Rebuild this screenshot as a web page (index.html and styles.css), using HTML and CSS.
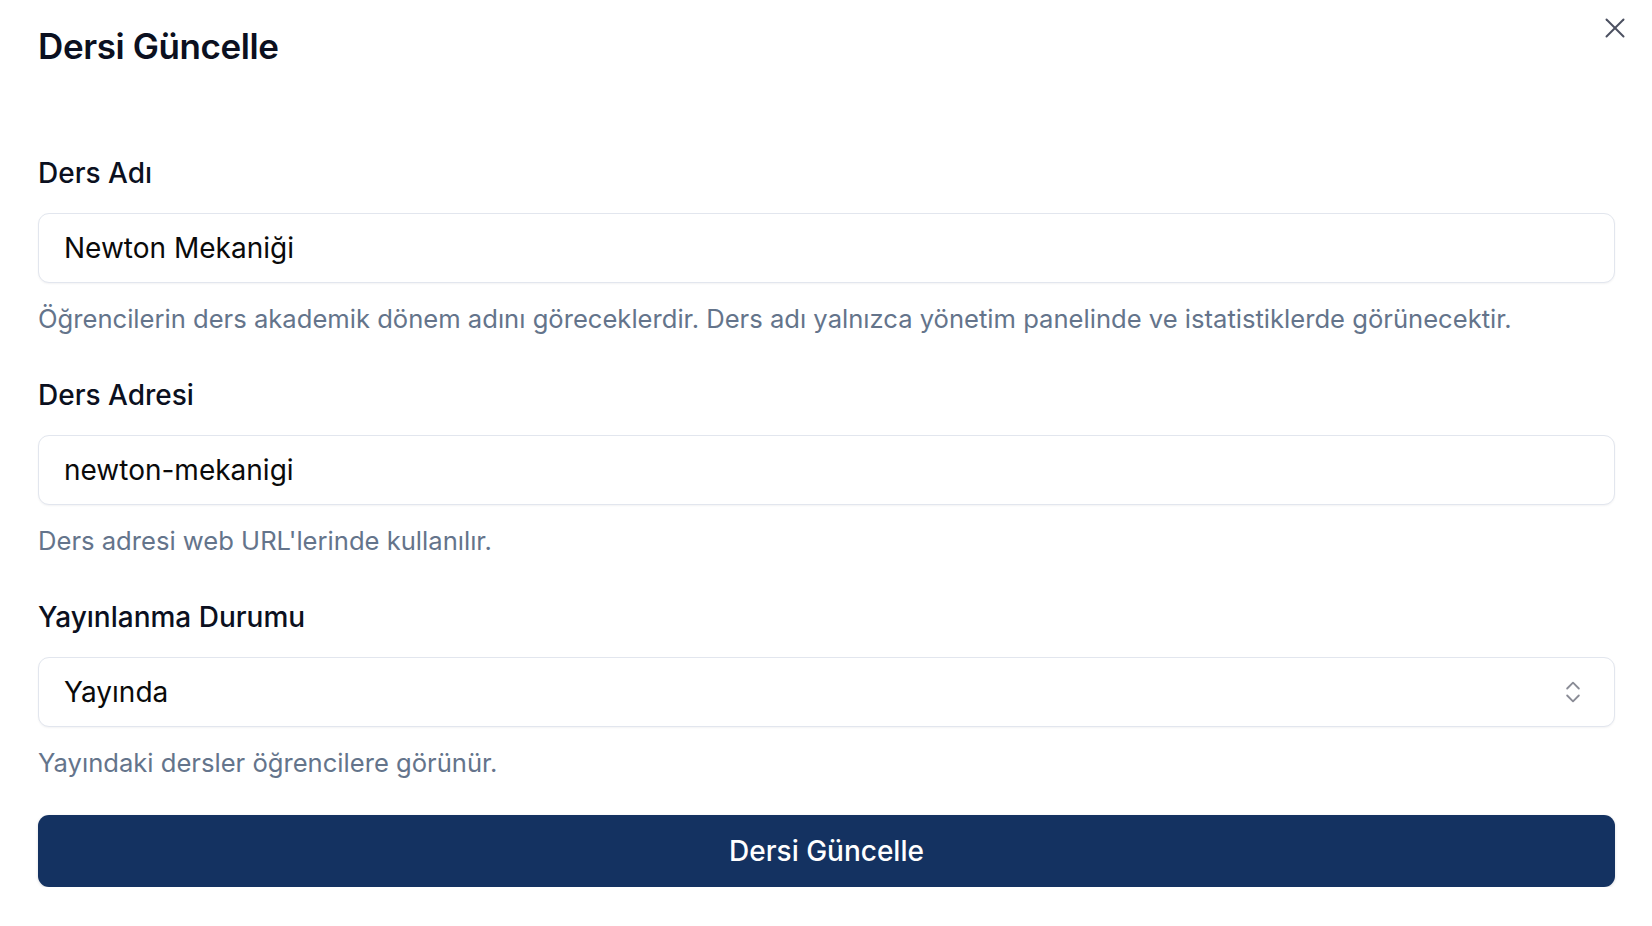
FILE: index.html
```html
<!DOCTYPE html>
<html lang="tr">
<head>
    <meta charset="UTF-8">
    <meta name="viewport" content="width=device-width, initial-scale=1.0">
    <title>Dersi Güncelle</title>
    <link rel="stylesheet" href="styles.css">
</head>
<body>
    <div class="dialog">
        <button type="button" class="close" aria-label="Kapat">
            <svg width="20" height="20" viewBox="0 0 20 20" fill="none" stroke="currentColor" stroke-width="2" stroke-linecap="round">
                <path d="M1.5 1.5 18.5 18.5"/>
                <path d="M18.5 1.5 1.5 18.5"/>
            </svg>
        </button>

        <h2 class="title">Dersi Güncelle</h2>

        <form class="form">
            <div class="field">
                <label for="name">Ders Adı</label>
                <input id="name" class="input" type="text" value="Newton Mekaniği">
                <p class="help">Öğrencilerin ders akademik dönem adını göreceklerdir. Ders adı yalnızca yönetim panelinde ve istatistiklerde görünecektir.</p>
            </div>

            <div class="field">
                <label for="slug">Ders Adresi</label>
                <input id="slug" class="input" type="text" value="newton-mekanigi">
                <p class="help">Ders adresi web URL'lerinde kullanılır.</p>
            </div>

            <div class="field">
                <label for="status">Yayınlanma Durumu</label>
                <button type="button" id="status" class="input select">
                    <span>Yayında</span>
                    <svg width="28" height="28" viewBox="0 0 24 24" fill="none" stroke="currentColor" stroke-width="1.6" stroke-linecap="round" stroke-linejoin="round">
                        <path d="m7 15 5 5 5-5"/>
                        <path d="m7 9 5-5 5 5"/>
                    </svg>
                </button>
                <p class="help">Yayındaki dersler öğrencilere görünür.</p>
            </div>

            <button type="button" class="submit">Dersi Güncelle</button>
        </form>
    </div>
</body>
</html>
```

FILE: styles.css
```css
body {
    margin: 0;
    background-color: #ffffff;
    font-family: Inter, "Noto Sans", sans-serif;
    color: #0b1020;
}
.dialog {
    position: relative;
    padding: 25px 37px 0 38px;
}
.close {
    position: absolute;
    top: 18px;
    right: 27px;
    padding: 0;
    border: none;
    background: none;
    color: #4b5060;
    cursor: pointer;
    line-height: 0;
}
.title {
    margin: 0;
    font-size: 35px;
    line-height: 42px;
    font-weight: 600;
    letter-spacing: -0.4px;
}
.form {
    margin-top: 89px;
}
.field {
    margin-bottom: 43px;
}
label {
    display: block;
    font-size: 28px;
    line-height: 34px;
    font-weight: 500;
    margin-bottom: 23px;
}
.input {
    box-sizing: border-box;
    display: block;
    width: 100%;
    height: 70px;
    padding: 0 25px;
    border: 1.5px solid #e2e6ee;
    border-radius: 11px;
    background: #ffffff;
    box-shadow: 0 1px 2px rgba(15, 23, 42, 0.05);
    font-family: inherit;
    font-size: 28px;
    color: #0a0a0a;
    outline: none;
}
.select {
    display: flex;
    align-items: center;
    justify-content: space-between;
    text-align: left;
    cursor: pointer;
}
.select svg {
    color: #8a8c96;
    margin-right: 2px;
}
.help {
    margin: 20px 0 0;
    font-size: 25.6px;
    line-height: 32px;
    color: #64748b;
}
.field:last-of-type {
    margin-bottom: 36px;
}
.submit {
    display: block;
    width: 100%;
    height: 72px;
    border: none;
    border-radius: 11px;
    background-color: #143261;
    box-shadow: 0 1px 3px rgba(15, 23, 42, 0.15);
    color: #ffffff;
    font-family: inherit;
    font-size: 28px;
    font-weight: 500;
    cursor: pointer;
}
```
